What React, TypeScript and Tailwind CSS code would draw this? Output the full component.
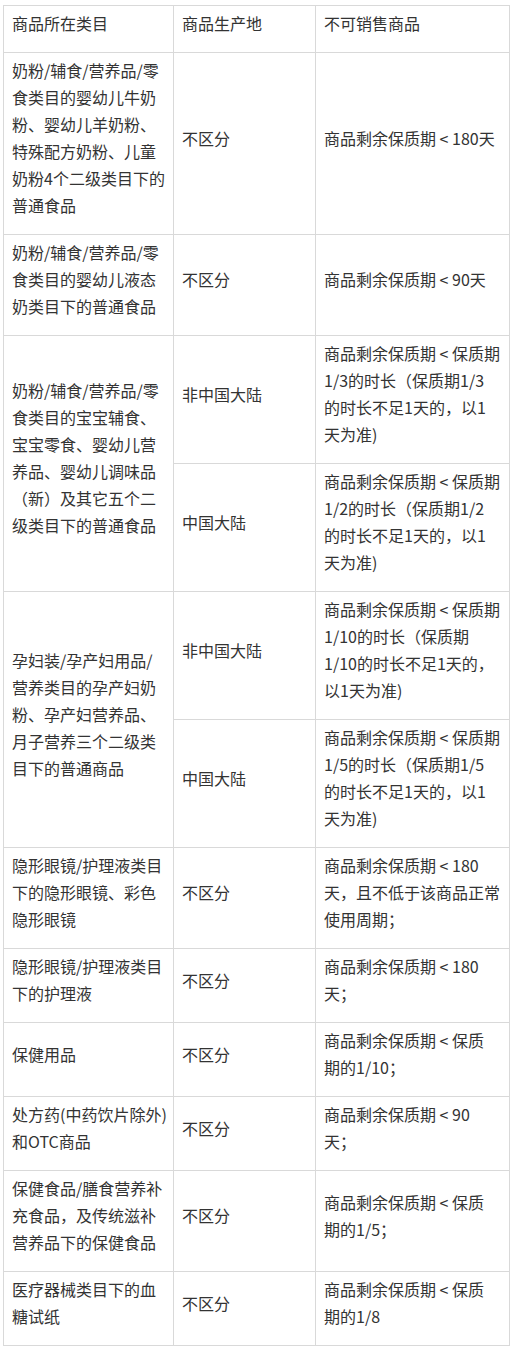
import React from "react";

type Cell = { lines: string[]; rowSpan?: number };
type Row = Cell[];

const rows: Row[] = [
  [
    { lines: ["奶粉/辅食/营养品/零", "食类目的婴幼儿牛奶", "粉、婴幼儿羊奶粉、", "特殊配方奶粉、儿童", "奶粉4个二级类目下的", "普通食品"] },
    { lines: ["不区分"] },
    { lines: ["商品剩余保质期 < 180天"] },
  ],
  [
    { lines: ["奶粉/辅食/营养品/零", "食类目的婴幼儿液态", "奶类目下的普通食品"] },
    { lines: ["不区分"] },
    { lines: ["商品剩余保质期 < 90天"] },
  ],
  [
    { lines: ["奶粉/辅食/营养品/零", "食类目的宝宝辅食、", "宝宝零食、婴幼儿营", "养品、婴幼儿调味品", "（新）及其它五个二", "级类目下的普通食品"], rowSpan: 2 },
    { lines: ["非中国大陆"] },
    { lines: ["商品剩余保质期 < 保质期", "1/3的时长（保质期1/3", "的时长不足1天的，以1", "天为准)"] },
  ],
  [
    { lines: ["中国大陆"] },
    { lines: ["商品剩余保质期 < 保质期", "1/2的时长（保质期1/2", "的时长不足1天的，以1", "天为准)"] },
  ],
  [
    { lines: ["孕妇装/孕产妇用品/", "营养类目的孕产妇奶", "粉、孕产妇营养品、", "月子营养三个二级类", "目下的普通商品"], rowSpan: 2 },
    { lines: ["非中国大陆"] },
    { lines: ["商品剩余保质期 < 保质期", "1/10的时长（保质期", "1/10的时长不足1天的，", "以1天为准)"] },
  ],
  [
    { lines: ["中国大陆"] },
    { lines: ["商品剩余保质期 < 保质期", "1/5的时长（保质期1/5", "的时长不足1天的，以1", "天为准)"] },
  ],
  [
    { lines: ["隐形眼镜/护理液类目", "下的隐形眼镜、彩色", "隐形眼镜"] },
    { lines: ["不区分"] },
    { lines: ["商品剩余保质期 < 180", "天，且不低于该商品正常", "使用周期；"] },
  ],
  [
    { lines: ["隐形眼镜/护理液类目", "下的护理液"] },
    { lines: ["不区分"] },
    { lines: ["商品剩余保质期 < 180", "天；"] },
  ],
  [
    { lines: ["保健用品"] },
    { lines: ["不区分"] },
    { lines: ["商品剩余保质期 < 保质", "期的1/10；"] },
  ],
  [
    { lines: ["处方药(中药饮片除外)", "和OTC商品"] },
    { lines: ["不区分"] },
    { lines: ["商品剩余保质期 < 90", "天；"] },
  ],
  [
    { lines: ["保健食品/膳食营养补", "充食品，及传统滋补", "营养品下的保健食品"] },
    { lines: ["不区分"] },
    { lines: ["商品剩余保质期 < 保质", "期的1/5；"] },
  ],
  [
    { lines: ["医疗器械类目下的血", "糖试纸"] },
    { lines: ["不区分"] },
    { lines: ["商品剩余保质期 < 保质", "期的1/8"] },
  ],
];

const cellCls =
  "border border-[#d9d9d9] px-[8px] pt-[4px] pb-[15px] align-middle text-left font-normal whitespace-nowrap";

function Lines({ lines }: { lines: string[] }) {
  return (
    <>
      {lines.map((l, i) => (
        <React.Fragment key={i}>
          {i > 0 && <br />}
          {l}
        </React.Fragment>
      ))}
    </>
  );
}

export default function App() {
  return (
    <div
      className="bg-white pt-[5px] pl-[3px] text-[16px] leading-[27px] text-[#333333]"
      style={{ fontFamily: '"Noto Sans CJK SC", "Noto Sans", sans-serif' }}
    >
      <table className="table-fixed border-collapse w-[506px]">
        <colgroup>
          <col className="w-[170px]" />
          <col className="w-[142px]" />
          <col className="w-[194px]" />
        </colgroup>
        <thead>
          <tr>
            <th className={cellCls}>商品所在类目</th>
            <th className={cellCls}>商品生产地</th>
            <th className={cellCls}>不可销售商品</th>
          </tr>
        </thead>
        <tbody>
          {rows.map((r, i) => (
            <tr key={i}>
              {r.map((c, j) => (
                <td key={j} rowSpan={c.rowSpan} className={cellCls}>
                  <Lines lines={c.lines} />
                </td>
              ))}
            </tr>
          ))}
        </tbody>
      </table>
    </div>
  );
}
